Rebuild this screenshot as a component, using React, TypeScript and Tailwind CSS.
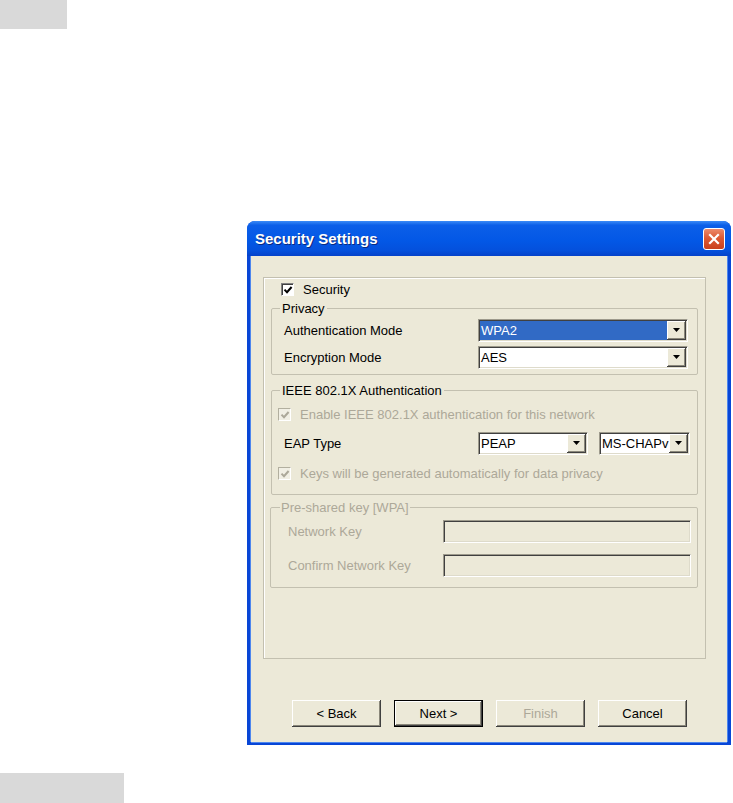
import React from "react";

const sunken =
  "border border-t-[#9d9a8c] border-l-[#9d9a8c] border-b-white border-r-white shadow-[inset_1px_1px_0_#404040,inset_-1px_-1px_0_#dedbcb]";

const raised =
  "bg-[#ece9d8] shadow-[inset_-1px_-1px_0_#404040,inset_1px_1px_0_#ffffff,inset_-2px_-2px_0_#8a877a]";

function Check({ disabled }: { disabled?: boolean }) {
  return (
    <span
      className={
        disabled
          ? "flex h-[13px] w-[13px] shrink-0 items-center justify-center border border-t-[#b2af9f] border-l-[#b2af9f] border-b-white border-r-white bg-[#f1efe4]"
          : "flex h-[13px] w-[13px] shrink-0 items-center justify-center border border-t-[#808080] border-l-[#808080] border-b-white border-r-white bg-white shadow-[inset_1px_1px_0_#404040]"
      }
    >
      <svg width="10" height="10" viewBox="0 0 10 10">
        <path
          d="M1.5 4.6 L4 7.2 L8.6 2"
          stroke={disabled ? "#aca899" : "#000"}
          strokeWidth="2"
          fill="none"
        />
      </svg>
    </span>
  );
}

function Arrow() {
  return (
    <span className={`flex h-full w-[19px] shrink-0 items-center justify-center ${raised}`}>
      <svg width="8" height="5" viewBox="0 0 8 5">
        <path d="M0 0 H7 L3.5 4 Z" fill="#000" />
      </svg>
    </span>
  );
}

function Select({
  value,
  className,
  selected,
}: {
  value: string;
  className: string;
  selected?: boolean;
}) {
  return (
    <div className={`flex h-[23px] bg-white p-[1px] ${sunken} ${className}`}>
      <span
        className={
          selected
            ? "flex flex-1 items-center whitespace-nowrap bg-[#316ac5] pl-[1px] text-white"
            : "flex flex-1 items-center whitespace-nowrap pl-[1px] text-black"
        }
      >
        {value}
      </span>
      <Arrow />
    </div>
  );
}

function Btn({
  children,
  primary,
  disabled,
}: {
  children: React.ReactNode;
  primary?: boolean;
  disabled?: boolean;
}) {
  return (
    <div
      className={`flex h-[27px] w-[89px] items-center justify-center ${raised} ${
        primary ? "border border-black" : ""
      } ${disabled ? "text-[#aca899]" : "text-black"}`}
    >
      {children}
    </div>
  );
}

export default function App() {
  return (
    <div className="flex h-[803px] w-[733px] flex-col overflow-hidden bg-white font-['Liberation_Sans',Arial,sans-serif] text-[13px] leading-[15px]">
      <div className="h-[29px] w-[67px] bg-[#d9d9d9]" />

      {/* dialog window */}
      <div className="ml-[247px] mt-[192px] flex h-[524px] w-[484px] flex-col rounded-t-[8px] bg-[#0846d6]">
        <div className="flex h-[35px] items-center justify-between rounded-t-[8px] bg-[linear-gradient(180deg,#3b8bf7_0%,#0c5fe8_12%,#0358e6_55%,#0450dc_85%,#0542c9_100%)] pl-[8px] pr-[6px]">
          <span className="text-[15px] font-bold text-white [text-shadow:1px_1px_0_#0a2a80]">
            Security Settings
          </span>
          <div className="flex h-[22px] w-[22px] items-center justify-center rounded-[3px] border border-white bg-[linear-gradient(180deg,#ec8a6b_0%,#dd5a34_45%,#c9401c_100%)]">
            <svg width="12" height="12" viewBox="0 0 12 12">
              <path d="M2 2 L10 10 M10 2 L2 10" stroke="#fff" strokeWidth="2.2" strokeLinecap="square" />
            </svg>
          </div>
        </div>

        <div className="mx-[4px] mb-[3px] flex flex-1 flex-col bg-[#ece9d8] shadow-[-1px_0_0_#4d86ee,1px_0_0_#4d86ee,0_1px_0_#4d86ee]">
          {/* outer group */}
          <div className="ml-[12px] mt-[21px] flex h-[382px] w-[443px] flex-col border border-[#c3c0b0] shadow-[inset_1px_1px_0_#ffffff]">
            <div className="ml-[17px] mt-[4px] flex h-[15px] items-center gap-[9px]">
              <Check />
              <span>Security</span>
            </div>

            {/* Privacy */}
            <fieldset className="ml-[7px] mt-[4px] h-[74px] w-[427px] rounded-[2px] border border-[#c3c0b0]">
              <legend className="ml-[8px] px-[2px] leading-[15px]">Privacy</legend>
              <div className="mt-[3px] flex flex-col gap-[4px] pl-[12px]">
                <div className="flex items-center">
                  <span className="w-[194px]">Authentication Mode</span>
                  <Select value="WPA2" className="w-[210px]" selected />
                </div>
                <div className="flex items-center">
                  <span className="w-[194px]">Encryption Mode</span>
                  <Select value="AES" className="w-[210px]" />
                </div>
              </div>
            </fieldset>

            {/* IEEE 802.1X */}
            <fieldset className="ml-[7px] mt-[8px] h-[112px] w-[427px] rounded-[2px] border border-[#c3c0b0]">
              <legend className="ml-[8px] px-[2px] leading-[15px]">IEEE 802.1X Authentication</legend>
              <div className="mt-[9px] flex h-[15px] items-center gap-[9px] pl-[6px] text-[#aca899]">
                <Check disabled />
                <span>Enable IEEE 802.1X authentication for this network</span>
              </div>
              <div className="mt-[10px] flex items-center pl-[12px]">
                <span className="w-[194px]">EAP Type</span>
                <Select value="PEAP" className="w-[110px]" />
                <Select value="MS-CHAPv" className="ml-[11px] w-[91px]" />
              </div>
              <div className="mt-[11px] flex h-[15px] items-center gap-[9px] pl-[6px] text-[#aca899]">
                <Check disabled />
                <span>Keys will be generated automatically for data privacy</span>
              </div>
            </fieldset>

            {/* Pre-shared key */}
            <fieldset className="ml-[6px] mt-[5px] h-[88px] w-[428px] rounded-[2px] border border-[#c3c0b0] text-[#aca899]">
              <legend className="ml-[9px] px-[1px] leading-[15px]">Pre-shared key [WPA]</legend>
              <div className="mt-[5px] flex flex-col gap-[11px] pl-[17px]">
                <div className="flex items-center">
                  <span className="w-[155px]">Network Key</span>
                  <div className={`h-[23px] w-[248px] bg-[#ece9d8] ${sunken}`} />
                </div>
                <div className="flex items-center">
                  <span className="w-[155px]">Confirm Network Key</span>
                  <div className={`h-[23px] w-[248px] bg-[#ece9d8] ${sunken}`} />
                </div>
              </div>
            </fieldset>
          </div>

          {/* buttons */}
          <div className="ml-[41px] mt-[41px] flex gap-[13px]">
            <Btn>&lt; Back</Btn>
            <Btn primary>Next &gt;</Btn>
            <Btn disabled>Finish</Btn>
            <Btn>Cancel</Btn>
          </div>
        </div>
      </div>

      <div className="mt-[28px] h-[30px] w-[124px] bg-[#d9d9d9]" />
    </div>
  );
}
